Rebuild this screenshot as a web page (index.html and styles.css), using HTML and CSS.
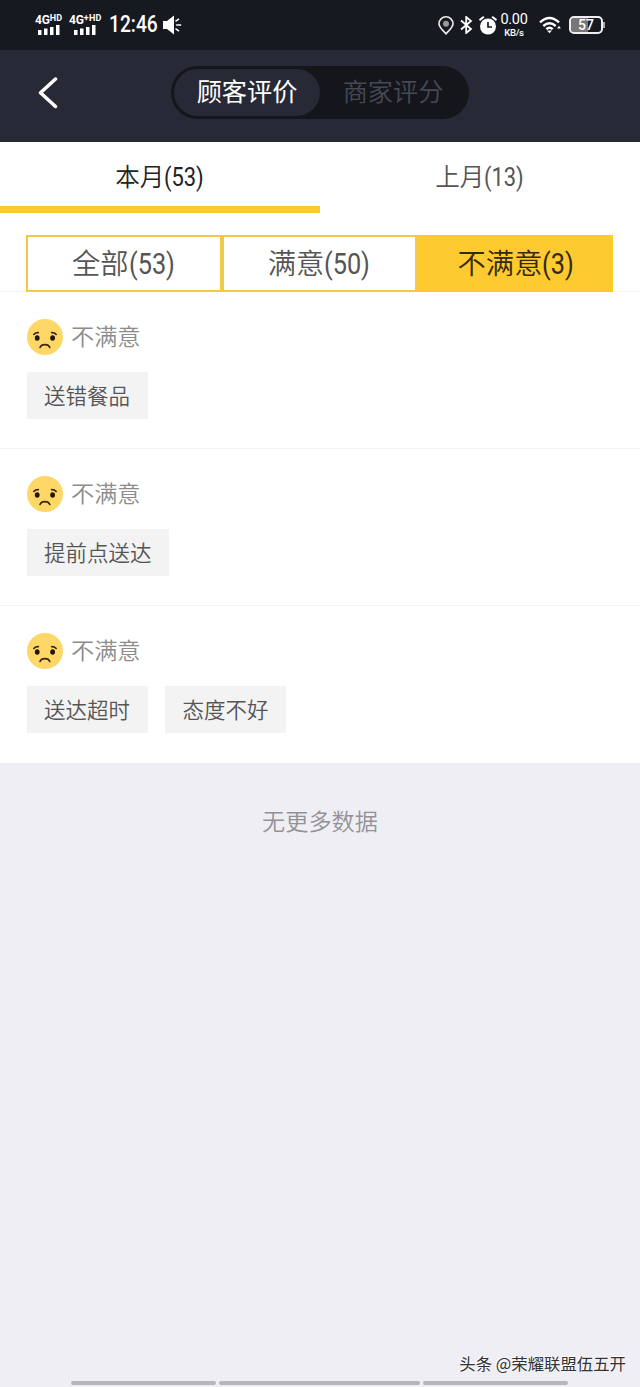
FILE: index.html
```html
<!DOCTYPE html>
<html lang="zh-CN">
<head>
<meta charset="utf-8">
<title>顾客评价</title>
<link rel="stylesheet" href="styles.css">
</head>
<body>
<svg class="defs" width="0" height="0" aria-hidden="true">
  <symbol id="sad" viewBox="0 0 36 36">
    <circle cx="18" cy="18" r="18" fill="#fed766"/>
    <ellipse cx="10.200" cy="19" rx="2.400" ry="2.700" fill="#24150b"/>
    <ellipse cx="25.600" cy="19" rx="2.400" ry="2.700" fill="#24150b"/>
    <path d="M6.800 15.400q1.400-1.800 4.600-1.800M29.200 15.400q-1.400-1.800-4.600-1.800M13 28.500c1.400-3.900 8.400-3.900 9.800 0" fill="none" stroke="#3a2412" stroke-width="1.600" stroke-linecap="round"/>
  </symbol>
  <symbol id="bars" viewBox="0 0 22 10">
    <path d="M0 5h3.500v5H0zM6 3.500h3.500V10H6zM12 2h3.500v8H12zM18 0h3.500v10H18z" fill="#fff"/>
  </symbol>
</svg>

<div class="status">
  <div class="signal"><span class="net">4G<small>HD</small></span><svg class="bars"><use href="#bars"/></svg></div>
  <div class="signal signal-plus"><span class="net">4G<small>+HD</small></span><svg class="bars"><use href="#bars"/></svg></div>
  <span class="clock">12:46</span>
  <svg class="speaker" width="19" height="20" viewBox="0 0 19 20"><path d="M0 6h4l7-5.500v19L4 14H0z" fill="#fff"/><path d="M12.500 6.300l3.500-2.500M13.200 10h5M12.500 13.700l3.500 2.500" stroke="#fff" stroke-width="1.500"/></svg>
  <div class="status-right">
    <svg class="pin" width="16" height="19" viewBox="0 0 16 19"><path d="M8 17.800C5.500 14.800 1 11.600 1 7.800a7 7 0 0 1 14 0c0 3.800-4.500 7-7 10z" fill="none" stroke="#eee" stroke-width="1.600"/><circle cx="8" cy="7.700" r="3" fill="#999"/></svg>
    <svg class="bluetooth" width="13" height="18" viewBox="0 0 13 18"><path d="M1 4.500l10 8.500-4.800 4V1L11 5 1 13.500" fill="none" stroke="#fff" stroke-width="1.800"/></svg>
    <svg class="alarm" width="18" height="19" viewBox="0 0 18 19"><circle cx="9" cy="10.500" r="8" fill="#fff"/><path d="M1.200 3.600l3-2.400M16.800 3.600l-3-2.400" stroke="#fff" stroke-width="2" stroke-linecap="round"/><path d="M9 6v5h4" fill="none" stroke="#171920" stroke-width="1.700"/></svg>
    <div class="speed"><span class="rate">0.00</span><span class="unit">KB/s</span></div>
    <svg class="wifi" width="22" height="18" viewBox="0 0 22 18"><path d="M1 6.400q9.500-8.800 19 0M4.300 10q6.200-5.600 12.400 0M7.300 13.200q3.200-2.800 6.400 0" fill="none" stroke="#fff" stroke-width="2.400"/><path d="M8 14.400h5l-2.500 2.800zM18 12.500l2-2.800 1.800 2.800z" fill="#fff"/></svg>
    <div class="battery"><span>57</span></div>
  </div>
</div>

<header class="header">
  <svg class="back" width="20" height="32" viewBox="0 0 20 32"><path d="M17.500 2L2.500 15.700l15 13.800" fill="none" stroke="#fff" stroke-width="3.500" stroke-linecap="round" stroke-linejoin="round"/></svg>
  <div class="switch">
    <span class="switch-item active">顾客评价</span>
    <span class="switch-item">商家评分</span>
  </div>
</header>

<nav class="tabs">
  <div class="tab active">本月<span class="num">(53)</span></div>
  <div class="tab">上月<span class="num">(13)</span></div>
</nav>

<div class="filters">
  <div class="filter">全部<span class="num">(53)</span></div>
  <div class="filter">满意<span class="num">(50)</span></div>
  <div class="filter active">不满意<span class="num">(3)</span></div>
</div>

<main>
  <section class="review">
    <div class="rating"><svg class="face"><use href="#sad"/></svg><span>不满意</span></div>
    <div class="tags"><span class="tag">送错餐品</span></div>
  </section>
  <section class="review">
    <div class="rating"><svg class="face"><use href="#sad"/></svg><span>不满意</span></div>
    <div class="tags"><span class="tag">提前点送达</span></div>
  </section>
  <section class="review">
    <div class="rating"><svg class="face"><use href="#sad"/></svg><span>不满意</span></div>
    <div class="tags"><span class="tag">送达超时</span><span class="tag">态度不好</span></div>
  </section>
</main>

<p class="end">无更多数据</p>

<footer class="footer">
  <div class="credit">头条 @荣耀联盟伍五开</div>
  <div class="navbar"><i></i><i></i><i></i></div>
</footer>
</body>
</html>
```
FILE: styles.css
```css
* { box-sizing: border-box; }
body {
  margin: 0;
  width: 640px;
  height: 1387px;
  overflow: hidden;
  display: flex;
  flex-direction: column;
  background: #efeef4;
  font-family: "Noto Sans CJK SC", sans-serif;
  font-weight: 350;
}
svg { display: block; flex: none; }
.defs { position: absolute; }

.status {
  height: 50px;
  flex: none;
  display: flex;
  align-items: center;
  padding: 0 37px 0 35px;
  background: #171920;
  color: #fff;
  font-family: Roboto, sans-serif;
}
.signal { width: 28px; height: 20px; }
.signal-plus { width: 34px; margin-left: 6px; }
.net { display: flex; height: 10px; font-size: 12px; line-height: 11px; font-weight: 700; letter-spacing: -0.2px; }
.net small { font-size: 9px; line-height: 6px; letter-spacing: 0.3px; }
.bars { width: 22px; height: 10px; margin-left: 3px; }
.signal-plus .bars { margin-left: 5px; }
.clock { margin-left: 6px; width: 48px; font-size: 24px; font-weight: 500; line-height: 48px; padding-bottom: 2px; white-space: nowrap; transform: scaleX(0.8); transform-origin: left; }
.speaker { margin-left: 6px; }
.status-right { margin-left: auto; display: flex; align-items: center; }
.pin { margin-right: -1px; }
.bluetooth { margin-left: 7px; }
.alarm { margin-left: 6px; }
.speed { width: 28px; margin-left: 3px; display: flex; flex-direction: column; align-items: center; }
.rate { font-size: 14.500px; line-height: 15px; font-weight: 400; letter-spacing: -0.3px; }
.unit { font-size: 9.500px; line-height: 11px; font-weight: 500; letter-spacing: -0.3px; }
.wifi { margin-left: 11px; }
.battery {
  position: relative;
  width: 34px;
  height: 18px;
  margin-left: 8px;
  border: 2px solid #eee;
  border-radius: 5px;
  background: linear-gradient(90deg, #777 57%, #171920 57%) padding-box;
  font-size: 14px;
  line-height: 15px;
  font-weight: 500;
  text-align: center;
}
.battery::after { content: ""; position: absolute; right: -4px; top: 4px; width: 2px; height: 6px; background: #aaa; }

.header {
  height: 92px;
  flex: none;
  display: grid;
  grid-template-columns: 133px 298px;
  align-items: center;
  padding-left: 38px;
  background: #272a36;
}
.back { margin-bottom: 7px; }
.switch {
  height: 53px;
  margin-bottom: 7px;
  padding: 3px;
  display: flex;
  border-radius: 27px;
  background: #15161b;
}
.switch-item { flex: 1; line-height: 43px; text-align: center; font-size: 25.200px; color: #454955; border-radius: 24px; }
.switch-item.active { flex: none; width: 146px; background: #272a36; color: #fff; font-weight: 400; }

.tabs { height: 71px; flex: none; display: flex; background: #fff; }
.tab { flex: 1; border-bottom: 7px solid transparent; text-align: center; font-size: 24.500px; line-height: 67px; color: #555; height: 71px; }
.tab.active { color: #222; border-color: #fbca2f; }
.num { display: inline-block; font-family: Roboto, sans-serif; font-size: 1.040em; line-height: 1; font-weight: 400; transform: scaleX(0.86); transform-origin: left; margin-right: -0.220em; }

.filters { height: 79px; flex: none; display: flex; padding: 22px 27px 0 26px; background: #fff; border-bottom: 1px solid #f5f5f7; }
.filter { flex: 1; height: 57px; border: 2px solid #f2c84b; text-align: center; font-size: 28.300px; line-height: 50px; color: #555; }
.filter.active { background: #fdca2f; border-color: #fdca2f; color: #33290f; }

.review { height: 157px; padding: 27px 27px 0 26.500px; background: #fff; border-bottom: 1px solid #f4f4f5; }
.review:last-child { border-bottom: 0; }
.rating { display: flex; align-items: center; gap: 8.500px; height: 36px; color: #8c8c8c; font-size: 23.200px; }
.rating span { line-height: 32px; padding-bottom: 4px; }
.face { width: 36px; height: 36px; margin-top: -1px; }
.tags { display: flex; gap: 17.500px; margin-top: 17px; }
.tag { height: 47px; padding: 0 17.500px; background: #f3f3f3; color: #555; font-size: 21.500px; line-height: 45px; }

.end { margin: 41px 0 0; text-align: center; font-size: 23.200px; line-height: 32px; color: #929296; }

.footer { margin-top: auto; }
.credit {
  padding-right: 14px;
  text-align: right;
  font-size: 16.400px;
  line-height: 24px;
  padding-bottom: 1px;
  color: #333;
  font-weight: 400;
  text-shadow: -1px -1px 0 #fff;
}
.navbar { height: 11px; padding: 5px 71px 0; display: grid; grid-template-columns: 145px 201px 145px; gap: 3px; }
.navbar i { height: 4px; background: #b6b5bb; border-radius: 2px; }
```
